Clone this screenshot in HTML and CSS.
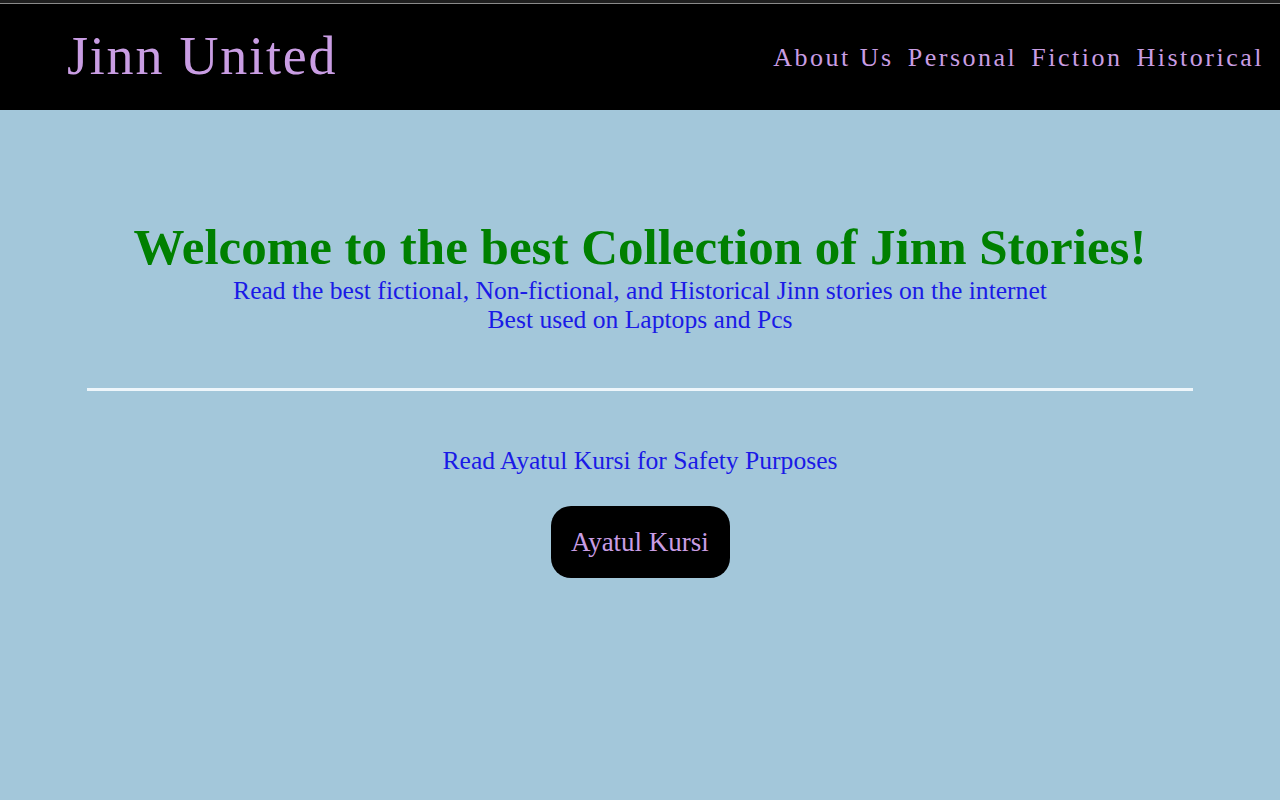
FILE: index.html
```html
<!DOCTYPE html>
<html lang="en">
<head>
<meta charset="utf-8">
<title>Jinn United</title>
<link rel="stylesheet" href="styles.css">
</head>
<body>
<div class="topline"></div>
<header class="header">
  <div class="logo">Jinn United</div>
  <nav class="nav">
    <a href="#">About Us</a>
    <a href="#">Personal</a>
    <a href="#">Fiction</a>
    <a href="#">Historical</a>
  </nav>
</header>
<main class="main">
  <section class="intro">
    <h1 class="title">Welcome to the best Collection of Jinn Stories!</h1>
    <p class="sub">Read the best fictional, Non-fictional, and Historical Jinn stories on the internet</p>
    <p class="sub">Best used on Laptops and Pcs</p>
  </section>
  <div class="rule"></div>
  <p class="safety">Read Ayatul Kursi for Safety Purposes</p>
  <a class="btn" href="#">Ayatul Kursi</a>
</main>
</body>
</html>
```
FILE: styles.css
```css
html, body {
  margin: 0;
  padding: 0;
}
body {
  background: #a3c7da;
  font-family: "Liberation Serif", "Times New Roman", serif;
  min-height: 800px;
}
.topline {
  height: 3px;
  background: #1e1e1e;
  border-bottom: 1px solid #8a8a8a;
}
.header {
  background: #000;
  height: 106px;
  display: flex;
  align-items: center;
  justify-content: space-between;
  padding: 0 16px 0 67px;
}
.logo {
  color: #c99de3;
  font-size: 54px;
  letter-spacing: 1.8px;
  margin-top: -2px;
}
.nav {
  display: flex;
  gap: 14px;
  margin-top: 2px;
}
.nav a {
  color: #c99de3;
  text-decoration: none;
  font-size: 26px;
  letter-spacing: 2.5px;
}
.main {
  display: flex;
  flex-direction: column;
  align-items: center;
}
.intro {
  text-align: center;
  margin-top: 108px;
}
.title {
  color: #008000;
  font-size: 51px;
  font-weight: bold;
  margin: 0;
  line-height: 58px;
}
.sub {
  color: #1a1ae6;
  font-size: 25.6px;
  margin: 0;
  line-height: 29px;
}
.rule {
  width: 1106px;
  height: 3px;
  background: #eef6fb;
  margin-top: 54px;
}
.safety {
  color: #1a1ae6;
  font-size: 25.6px;
  margin: 55px 0 0;
  line-height: 29px;
}
.btn {
  margin-top: 31px;
  background: #000;
  color: #c99de3;
  text-decoration: none;
  font-size: 27px;
  width: 179px;
  height: 72px;
  border-radius: 20px;
  display: flex;
  align-items: center;
  justify-content: center;
}
```
